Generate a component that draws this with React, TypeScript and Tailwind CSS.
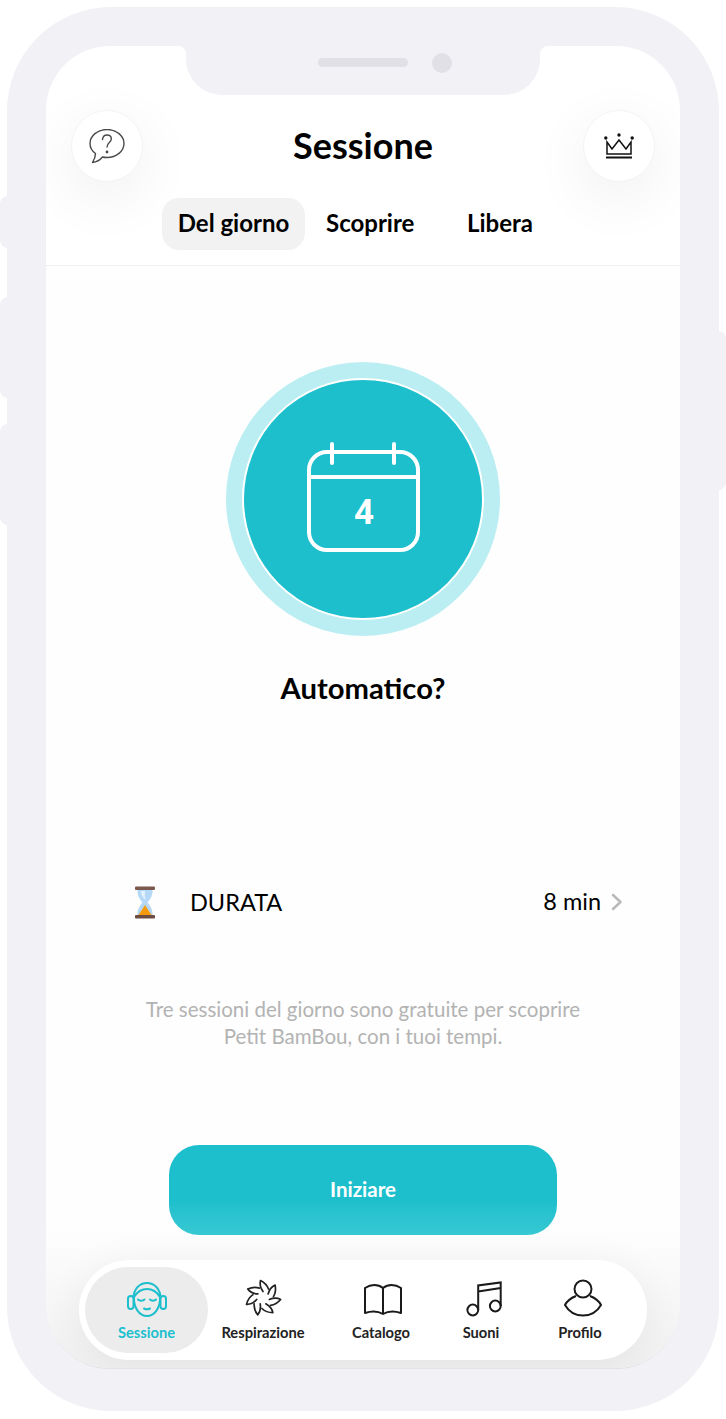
import type { ReactNode } from "react";

const font = { fontFamily: "Lato, 'Noto Sans', sans-serif" };

function QuestionIcon() {
  return (
    <svg width="36" height="35" viewBox="0 0 36 35" fill="none" stroke="#4a4a4a" strokeWidth="1.4" strokeLinejoin="round" strokeLinecap="round">
      <path d="M13.500 28c1.500.4 3 .5 4.500.5 9.400 0 17-6.300 17-14S27.400.5 18 .5 1 6.800 1 14.500c0 4 2 7.500 5.500 10 0 3.500-1.500 6.500-3 9 4-.5 7.500-2.500 10-5.500z" />
      <path d="M13.500 10.500c.3-2.800 2-4.500 4.500-4.500s4.300 1.700 4.300 3.900c0 3.600-4.300 3.800-4.300 8.100" />
      <circle cx="18" cy="23" r=".7" fill="#4a4a4a" />
    </svg>
  );
}

function CrownIcon() {
  return (
    <svg width="30" height="27" viewBox="0 0 30 27" fill="none" stroke="#111" strokeWidth="1.500">
      <path d="M3 9l5 7 7-9 7 9 5-7v12H3z" strokeLinejoin="miter" />
      <path d="M2 24.500h26" strokeWidth="1.800" />
      <circle cx="1.800" cy="5" r="1.700" fill="#111" stroke="none" />
      <circle cx="15" cy="2" r="1.700" fill="#111" stroke="none" />
      <circle cx="28.200" cy="5" r="1.700" fill="#111" stroke="none" />
    </svg>
  );
}

function CalendarIcon() {
  return (
    <svg width="113" height="110" viewBox="0 0 113 110" fill="none" stroke="#fff" strokeWidth="4" strokeLinecap="round">
      <rect x="2" y="10" width="109" height="98" rx="18" />
      <path d="M2 35h109" strokeLinecap="butt" />
      <path d="M25 2v19M87 2v19" />
    </svg>
  );
}

function Hourglass() {
  return (
    <svg width="20" height="33" viewBox="0 0 20 33">
      <path d="M2.500 3h15c.5 6-2 10-5 13.500 3 3.500 5.500 7.500 5 13.500h-15C2 24 4.500 20 7.500 16.500 4.500 13 2 9 2.500 3z" fill="#b5d8f7" />
      <path d="M6 5h4c-.5 3.500 0 6.500 1 9-2.500-1.500-5-5-5-9z" fill="#e3f1fd" />
      <path d="M10 19l6.500 10h-13z" fill="#f59a0c" />
      <rect x="0" y="0.500" width="20" height="3.500" rx="1" fill="#7b5a4d" />
      <rect x="0" y="29" width="20" height="3.500" rx="1" fill="#6d4c41" />
    </svg>
  );
}

function HeadphonesIcon() {
  return (
    <svg width="40" height="35" viewBox="0 0 40 35" fill="none" stroke="#1dbfcd" strokeWidth="2" strokeLinecap="round">
      <path d="M6.500 15C7 7 12.500 1 20 1s13 6 13.500 14" />
      <path d="M7 15c3-5 8-8 13-8s10 3 13 8" />
      <path d="M7 15c-.5 11 5.500 19 13 19s13.500-8 13-19" />
      <rect x="1" y="14" width="5.500" height="13" rx="2.700" />
      <rect x="33.500" y="14" width="5.500" height="13" rx="2.700" />
      <path d="M11 17.500c1.500 1.500 5 1.500 6.500 0M23 17.500c1.500 1.500 4.500 1.500 6 0M17 26.500c2 1 4 1 6 0" />
    </svg>
  );
}

function BreathIcon() {
  return (
    <svg width="38" height="38" viewBox="0 0 38 38" fill="none" stroke="#222" strokeWidth="1.700" strokeLinecap="round" strokeLinejoin="round">
      {[0, 51.4, 102.9, 154.3, 205.7, 257.1, 308.6].map((angle) => (
        <path key={angle} d="M19 12.500C16.500 9 15.500 5 16.500 1.500 19.500 3 23 6 24.500 10" transform={`rotate(${angle} 19 19)`} />
      ))}
    </svg>
  );
}

function BookIcon() {
  return (
    <svg className="mb-[2px] ml-[4px]" width="40" height="32" viewBox="0 0 40 32" fill="none" stroke="#1a1a1a" strokeWidth="2" strokeLinejoin="round">
      <path d="M2 5C8 1 15 1 20 5c5-4 12-4 18 0v25c-6-2-13-2-18 1-5-3-12-3-18-1z" />
      <path d="M20 5v26" />
    </svg>
  );
}

function MusicIcon() {
  return (
    <svg className="ml-[6px]" width="36" height="36" viewBox="0 0 36 36" fill="none" stroke="#1a1a1a" strokeWidth="2">
      <circle cx="6.800" cy="29" r="5.400" />
      <circle cx="29.300" cy="25" r="5.400" />
      <path d="M12.200 29V4.500L34.700 1.500V25M12.200 10.500L34.700 7" />
    </svg>
  );
}

function ProfileIcon() {
  return (
    <svg className="ml-[6px]" width="38" height="38" viewBox="0 0 38 38" fill="none" stroke="#1a1a1a" strokeWidth="2">
      <circle cx="19" cy="10" r="8.500" />
      <path d="M12 17C7 19 3 22 1 26c4 7 11 10.500 18 10.500S33 33 37 26c-2-4-6-7-11-9" />
    </svg>
  );
}

function NavItem({ label, icon, active, className }: { label: string; icon: ReactNode; active?: boolean; className: string }) {
  return (
    <div className={`flex h-[86px] flex-col items-center ${active ? "rounded-[43px] bg-[#ececed]" : ""} ${className}`}>
      <div className="flex h-[50px] items-end justify-center">{icon}</div>
      <span className={`mt-[6px] text-[14.7px] leading-[18px] font-bold ${active ? "text-[#1dbfcd]" : "text-[#222]"}`}>{label}</span>
    </div>
  );
}

export default function App() {
  return (
    <div className="relative h-[1419px] w-[726px] overflow-hidden bg-white p-[7px]" style={font}>
      {/* side buttons */}
      <div className="absolute top-[196px] left-0 h-[52px] w-[10px] rounded-l-[8px] bg-[#f1f1f6]" />
      <div className="absolute top-[297px] left-0 h-[101px] w-[10px] rounded-l-[8px] bg-[#f1f1f6]" />
      <div className="absolute top-[424px] left-0 h-[101px] w-[10px] rounded-l-[8px] bg-[#f1f1f6]" />
      <div className="absolute top-[331px] right-0 h-[159px] w-[10px] rounded-r-[8px] bg-[#f1f1f6]" />

      <div className="relative h-[1404px] w-[712px] rounded-[104px] bg-[#f1f1f6] px-[39px] pt-[39px]">
        <div className="relative flex h-[1323px] w-[634px] flex-col overflow-hidden rounded-[64px] border-b border-[#e2e2e6] bg-white">
          <header className="flex h-[220px] flex-col border-b border-[#eeeeee] pt-[64px]">
            <div className="flex items-center justify-between px-[25px]">
              <div className="flex h-[72px] w-[72px] items-center justify-center rounded-full border border-[#f3f3f3] bg-white shadow-[0_16px_60px_rgba(0,0,0,0.07)]">
                <QuestionIcon />
              </div>
              <h1 className="pb-[2px] text-[36px] leading-[70px] font-bold text-black">Sessione</h1>
              <div className="flex h-[72px] w-[72px] items-center justify-center rounded-full border border-[#f3f3f3] bg-white shadow-[0_16px_60px_rgba(0,0,0,0.07)]">
                <CrownIcon />
              </div>
            </div>
            <nav className="relative mt-[16px] flex items-center pl-[116px] text-[24px] font-bold text-black">
              <span className="flex h-[52px] w-[143px] items-center justify-center rounded-[17px] bg-[#f2f2f3] pb-[2px]">Del giorno</span>
              <span className="ml-[21px] w-[87px] pb-[2px] text-center">Scoprire</span>
              <span className="ml-[54px] w-[65px] pb-[2px] text-center">Libera</span>
            </nav>
          </header>

          {/* notch */}
          <div className="absolute top-0 left-[132px] h-[8px] w-[8px] bg-[#f1f1f6]">
            <div className="h-full w-full rounded-tr-[8px] bg-white" />
          </div>
          <div className="absolute top-0 left-[494px] h-[8px] w-[8px] bg-[#f1f1f6]">
            <div className="h-full w-full rounded-tl-[8px] bg-white" />
          </div>
          <div className="absolute top-0 left-[140px] flex h-[49px] w-[354px] items-center justify-center gap-[24px] rounded-b-[36px] bg-[#f1f1f6] pb-[16px] pl-[44px]">
            <div className="h-[9px] w-[90px] rounded-full bg-[#e0e0e6]" />
            <div className="h-[20px] w-[20px] rounded-full bg-[#e0e0e6]" />
          </div>

          <main className="flex flex-1 flex-col items-center bg-gradient-to-b from-[#fefefe] from-[87%] to-[#f0f0f1]">
            <div className="mt-[96px] flex h-[274px] w-[274px] items-center justify-center rounded-full bg-[#bbeef2]">
              <div className="flex h-[242px] w-[242px] items-center justify-center rounded-full border-2 border-white bg-[#1dbfcd]">
                <div className="relative mb-[4px] flex h-[110px] w-[113px] items-center justify-center pt-[31px] pl-[2px]">
                  <div className="absolute inset-0">
                    <CalendarIcon />
                  </div>
                  <span className="relative text-[35px] leading-none font-bold text-white" style={{ fontFamily: "Roboto, sans-serif" }}>
                    4
                  </span>
                </div>
              </div>
            </div>

            <h2 className="mt-[34px] text-[29.2px] leading-[36px] font-bold text-black">Automatico?</h2>

            <div className="mt-[179px] flex h-[34px] w-full items-center pr-[57px] pl-[89px]">
              <Hourglass />
              <span className="ml-[35px] text-[23.5px] leading-[34px] text-black">DURATA</span>
              <span className="ml-auto pb-[2px] text-[23.5px] leading-[34px] text-black">8 min</span>
              <svg className="ml-[10px]" width="12" height="18" viewBox="0 0 12 18" fill="none" stroke="#b9b9b9" strokeWidth="2.500" strokeLinecap="round" strokeLinejoin="round">
                <path d="M2 2l7.500 7L2 16" />
              </svg>
            </div>

            <p className="mt-[77px] text-center text-[20.5px] leading-[27px] text-[#b3b3b3]">
              Tre sessioni del giorno sono gratuite per scoprire
              <br />
              Petit BamBou, con i tuoi tempi.
            </p>

            <button className="mt-[95px] h-[90px] w-[388px] rounded-[30px] bg-gradient-to-b from-[#1dbfcd] from-60% to-[#36c8d2] pb-[2px] text-[20.5px] font-bold text-white">
              Iniziare
            </button>

            <div className="mt-[25px] flex h-[100px] w-[568px] items-center rounded-[50px] bg-white pl-[6px] shadow-[0_6px_40px_rgba(0,0,0,0.06)]">
              <NavItem label="Sessione" active icon={<HeadphonesIcon />} className="w-[123px]" />
              <NavItem label="Respirazione" icon={<BreathIcon />} className="w-[110px]" />
              <NavItem label="Catalogo" icon={<BookIcon />} className="ml-[23px] w-[80px]" />
              <NavItem label="Suoni" icon={<MusicIcon />} className="ml-[30px] w-[60px]" />
              <NavItem label="Profilo" icon={<ProfileIcon />} className="ml-[39px] w-[60px]" />
            </div>
          </main>
        </div>
      </div>
    </div>
  );
}
